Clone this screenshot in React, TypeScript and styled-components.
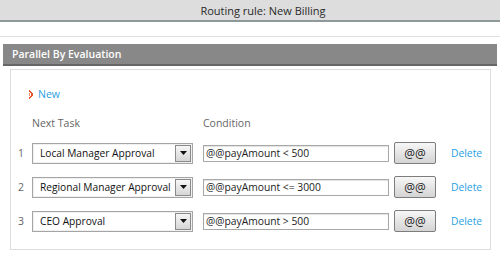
import React from "react";
import styled, { createGlobalStyle } from "styled-components";

const Global = createGlobalStyle`
  html, body { margin: 0; padding: 0; background: #ffffff; }
  body { font-family: "Open Sans", "DejaVu Sans", sans-serif; font-size: 11px; color: #333; }
`;

const Page = styled.div`
  width: 500px;
  height: 253px;
  overflow: hidden;
`;

const TitleBar = styled.div`
  height: 22px;
  background: #dddddd;
  border-bottom: 2px solid #8f9999;
  display: flex;
  align-items: center;
  justify-content: center;
  padding-left: 26px;
  box-sizing: border-box;
  color: #2a2a2a;
  font-size: 11px;
`;

const Divider = styled.div`
  margin-top: 14px;
  height: 1px;
  background: #e0e0e0;
`;

const SectionHeader = styled.div`
  margin: 7px 3px 0 3px;
  height: 22px;
  background: #888888;
  border-bottom: 2px solid #666;
  box-sizing: border-box;
  display: flex;
  align-items: center;
  padding-left: 9px;
  color: #ffffff;
  font-size: 10.5px;
  font-weight: 600;
`;

const Panel = styled.div`
  margin: 3px 9px 0 10px;
  border: 1px solid #dddddd;
  padding: 16px 0 17px 0;
`;

const NewLink = styled.div`
  display: flex;
  align-items: center;
  gap: 4px;
  height: 16px;
  padding-left: 18px;
  color: #2a9fdf;
  font-size: 10.5px;
`;

const Labels = styled.div`
  display: grid;
  grid-template-columns: 171px auto;
  margin-top: 13px;
  padding-left: 21px;
  height: 16px;
  align-items: center;
  color: #666;
  font-size: 10.5px;
`;

const Rows = styled.div`
  display: flex;
  flex-direction: column;
  gap: 12px;
  margin-top: 11px;
`;

const Row = styled.div`
  display: flex;
  align-items: center;
  height: 22px;
`;

const Num = styled.div`
  width: 21px;
  box-sizing: border-box;
  text-align: right;
  padding-right: 8px;
  color: #666;
  font-size: 10.5px;
`;

const Select = styled.div`
  width: 161px;
  height: 21px;
  box-sizing: border-box;
  border: 1px solid #a5a5a5;
  box-shadow: inset 0 0 0 1px #f0f0f0;
  display: flex;
  align-items: center;
  justify-content: space-between;
  padding: 0 1px 0 7px;
  color: #111;
  font-size: 10.2px;
  white-space: nowrap;
  background: #fff;
`;

const ArrowBox = styled.div`
  width: 16px;
  height: 17px;
  flex: none;
  box-sizing: border-box;
  border: 1px solid #8a8a8a;
  background: linear-gradient(#f6f6f6, #d6d6d6);
  display: flex;
  align-items: center;
  justify-content: center;
`;

const Input = styled.div`
  margin-left: 10px;
  width: 186px;
  height: 17px;
  box-sizing: border-box;
  border: 1px solid #a8a8a8;
  box-shadow: inset 0 1px 1px #e2e2e2;
  display: flex;
  align-items: center;
  padding-left: 2px;
  color: #222;
  font-size: 10.3px;
  white-space: nowrap;
`;

const AtButton = styled.div`
  margin-left: 5px;
  width: 42px;
  height: 22px;
  box-sizing: border-box;
  border: 1px solid #7d7d7d;
  border-radius: 2px;
  background: linear-gradient(#f7f7f7, #d4d4d4);
  display: flex;
  align-items: center;
  justify-content: center;
  color: #222;
  font-size: 12px;
  font-weight: 500;
`;

const DeleteLink = styled.div`
  margin-left: 15px;
  color: #2a9fdf;
  font-size: 10.3px;
`;

const NewIcon = () => (
  <svg width="5" height="9" viewBox="0 0 5 9">
    <rect x="0" y="0" width="1" height="1" fill="#e8542a" />
    <rect x="0" y="1" width="2" height="1" fill="#e8542a" />
    <rect x="1" y="2" width="2" height="1" fill="#e8542a" />
    <rect x="2" y="3" width="2" height="3" fill="#e8542a" />
    <rect x="1" y="6" width="2" height="1" fill="#e8542a" />
    <rect x="0" y="7" width="2" height="1" fill="#e8542a" />
    <rect x="0" y="8" width="1" height="1" fill="#e8542a" />
    <rect x="0" y="3" width="1" height="3" fill="#f08a6a" />
  </svg>
);

const DownArrow = () => (
  <svg width="7" height="4" viewBox="0 0 7 4">
    <path d="M0 0 H7 L3.5 4 Z" fill="#111" />
  </svg>
);

const rows = [
  { task: "Local Manager Approval", cond: "@@payAmount < 500" },
  { task: "Regional Manager Approval", cond: "@@payAmount <= 3000" },
  { task: "CEO Approval", cond: "@@payAmount > 500" },
];

export default function App() {
  return (
    <Page>
      <Global />
      <TitleBar>Routing rule: New Billing</TitleBar>
      <Divider />
      <SectionHeader>Parallel By Evaluation</SectionHeader>
      <Panel>
        <NewLink>
          <NewIcon />
          New
        </NewLink>
        <Labels>
          <span>Next Task</span>
          <span>Condition</span>
        </Labels>
        <Rows>
          {rows.map((r, i) => (
            <Row key={i}>
              <Num>{i + 1}</Num>
              <Select>
                <span>{r.task}</span>
                <ArrowBox>
                  <DownArrow />
                </ArrowBox>
              </Select>
              <Input>{r.cond}</Input>
              <AtButton>@@</AtButton>
              <DeleteLink>Delete</DeleteLink>
            </Row>
          ))}
        </Rows>
      </Panel>
    </Page>
  );
}
